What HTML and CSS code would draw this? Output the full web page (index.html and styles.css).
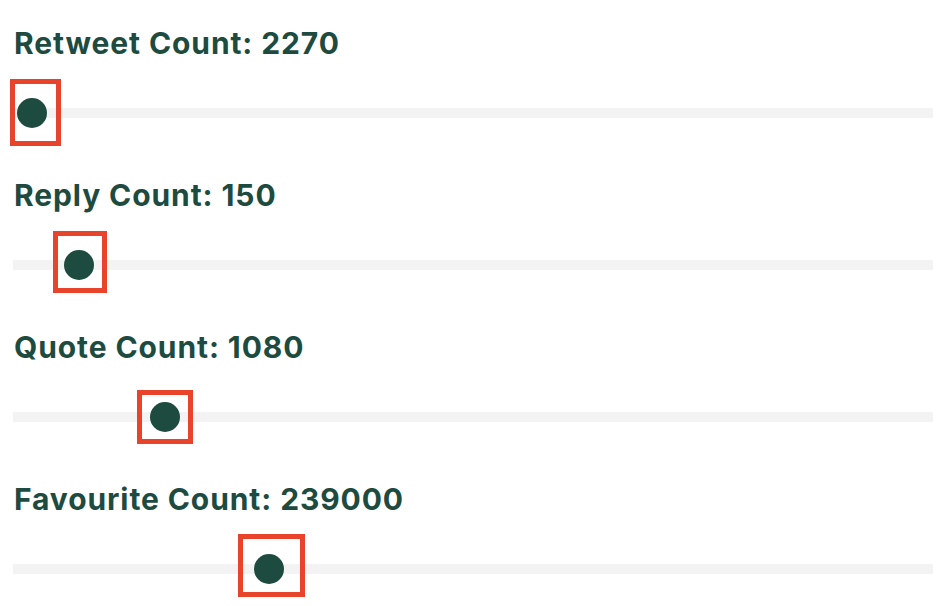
FILE: index.html
```html
<!DOCTYPE html>
<html lang="en">
<head>
<meta charset="utf-8">
<title>Tweet metrics</title>
<link rel="stylesheet" href="styles.css">
</head>
<body>
<main class="panel">
  <section class="field">
    <div class="label">Retweet Count: 2270</div>
    <div class="slider">
      <div class="track"></div>
      <div class="thumb" style="left: 4px;"></div>
      <div class="mark" style="left: -3px; top: -29px; width: 51px; height: 67px;"></div>
    </div>
  </section>
  <section class="field">
    <div class="label">Reply Count: 150</div>
    <div class="slider">
      <div class="track"></div>
      <div class="thumb" style="left: 51px;"></div>
      <div class="mark" style="left: 40px; top: -29px; width: 54px; height: 62px;"></div>
    </div>
  </section>
  <section class="field">
    <div class="label">Quote Count: 1080</div>
    <div class="slider">
      <div class="track"></div>
      <div class="thumb" style="left: 137px;"></div>
      <div class="mark" style="left: 124px; top: -22px; width: 56px; height: 54px;"></div>
    </div>
  </section>
  <section class="field">
    <div class="label">Favourite Count: 239000</div>
    <div class="slider">
      <div class="track"></div>
      <div class="thumb" style="left: 241px;"></div>
      <div class="mark" style="left: 225px; top: -30px; width: 67px; height: 63px;"></div>
    </div>
  </section>
</main>
</body>
</html>
```

FILE: styles.css
```css
html, body {
  margin: 0;
  padding: 0;
  background: #ffffff;
}

.panel {
  display: flex;
  flex-direction: column;
  padding: 26px 13px 0 13px;
  width: 920px;
}

.field {
  display: flex;
  flex-direction: column;
  height: 152px;
}

.label {
  font-family: Inter, "Noto Sans", sans-serif;
  font-weight: 700;
  font-size: 30px;
  line-height: 34px;
  letter-spacing: 0.9px;
  color: #1e4b3f;
  padding-left: 1px;
}

.slider {
  position: relative;
  margin-top: 48px;
  height: 10px;
}

.track {
  height: 10px;
  background: #f3f3f3;
}

.thumb {
  position: absolute;
  top: -10px;
  width: 30px;
  height: 30px;
  border-radius: 50%;
  background: #1e4b3f;
}

.mark {
  position: absolute;
  box-sizing: border-box;
  border: 5px solid #e8432b;
}
```
